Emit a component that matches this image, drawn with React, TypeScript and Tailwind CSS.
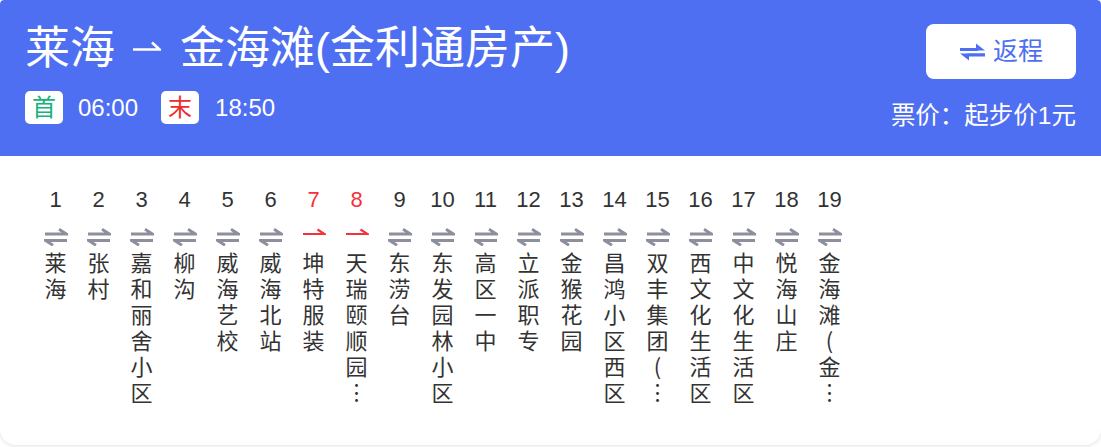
import React from "react";

const stops: { name: string; red?: boolean }[] = [
  { name: "莱海" },
  { name: "张村" },
  { name: "嘉和丽舍小区" },
  { name: "柳沟" },
  { name: "威海艺校" },
  { name: "威海北站" },
  { name: "坤特服装", red: true },
  { name: "天瑞颐顺园…", red: true },
  { name: "东涝台" },
  { name: "东发园林小区" },
  { name: "高区一中" },
  { name: "立派职专" },
  { name: "金猴花园" },
  { name: "昌鸿小区西区" },
  { name: "双丰集团(…" },
  { name: "西文化生活区" },
  { name: "中文化生活区" },
  { name: "悦海山庄" },
  { name: "金海滩(金…" },
];

const font = { fontFamily: '"Liberation Sans", "Noto Sans CJK SC", sans-serif' };

function DoubleHarpoon() {
  return (
    <svg width="24" height="18" viewBox="0 0 24 18" fill="none">
      <path d="M1 6H22.5L15 1.2" stroke="#8d909c" strokeWidth="2.8" strokeLinejoin="miter" />
      <path d="M23 12.5H1.5L9 17.3" stroke="#8d909c" strokeWidth="2.8" strokeLinejoin="miter" />
    </svg>
  );
}

function SingleHarpoon() {
  return (
    <svg width="24" height="18" viewBox="0 0 24 18" fill="none">
      <path d="M1 6H22.5L15.5 1.5" stroke="#f5323c" strokeWidth="2.2" strokeLinejoin="miter" />
    </svg>
  );
}

export default function App() {
  return (
    <div className="w-[1101px] h-[447px] bg-white" style={font}>
      <div className="h-[445px] bg-white rounded-t-[4px] rounded-b-[16px] shadow-[0_1px_4px_rgba(0,0,0,0.12)] overflow-hidden">
        {/* Header */}
        <div className="h-[156px] bg-[#4f6ff2] rounded-t-[4px] px-[25px] flex justify-between">
          <div className="pt-[21px]">
            <div className="flex items-center text-white text-[45px] leading-[55px]">
              <span>莱海</span>
              <svg width="28" height="24" viewBox="0 0 28 24" fill="none" className="ml-[18px] mr-[19px]">
                <path d="M0 12.5H26.5L19 5.5" stroke="white" strokeWidth="2.6" />
              </svg>
              <span>金海滩(金利通房产)</span>
            </div>
            <div className="mt-[15px] flex items-center text-white text-[24px] leading-[32px]">
              <div className="w-[38px] h-[33px] rounded-[5px] bg-white flex items-center justify-center text-[#17b27a] text-[24px]">
                首
              </div>
              <span className="ml-[15px]">06:00</span>
              <div className="ml-[23px] w-[38px] h-[33px] rounded-[5px] bg-white flex items-center justify-center text-[#f02b2b] text-[24px]">
                末
              </div>
              <span className="ml-[16px]">18:50</span>
            </div>
          </div>
          <div className="flex flex-col items-end">
            <div className="mt-[24px] w-[150px] h-[55px] rounded-[8px] bg-white flex items-center justify-center gap-[7px] text-[#4f6ff2] text-[25px]">
              <svg width="27" height="22" viewBox="0 0 27 22" fill="#4f6ff2">
                <path d="M1 7.5H17V2.5L26 9.5H1Z" />
                <path d="M26 13H10V19.5L1 12.5H26Z" />
                <rect x="1" y="7" width="18" height="3" />
                <rect x="8" y="12.5" width="18" height="3" />
              </svg>
              <span className="leading-[30px] -mt-[2px]">返程</span>
            </div>
            <div className="mt-[22px] text-white text-[24.5px] leading-[30px]">票价：起步价1元</div>
          </div>
        </div>

        {/* Stops */}
        <div className="pl-[34px] pt-[29px] flex">
          {stops.map((s, i) => (
            <div key={i} className="w-[43px] flex flex-col items-center">
              <div className={`text-[22px] leading-[30px] ${s.red ? "text-[#f5323c]" : "text-[#333333]"}`}>
                {i + 1}
              </div>
              <div className="mt-[13px] h-[18px]">{s.red ? <SingleHarpoon /> : <DoubleHarpoon />}</div>
              <div className="mt-[2px] flex flex-col items-center text-[22px] leading-[26px] text-[#333333] font-['Noto_Sans_CJK_SC',sans-serif]">
                {Array.from(s.name).map((c, j) => (
                  <span key={j} className="block h-[26px] leading-[26px] text-center">
                    {c === "…" ? "︙" : c}
                  </span>
                ))}
              </div>
            </div>
          ))}
        </div>
      </div>
    </div>
  );
}
